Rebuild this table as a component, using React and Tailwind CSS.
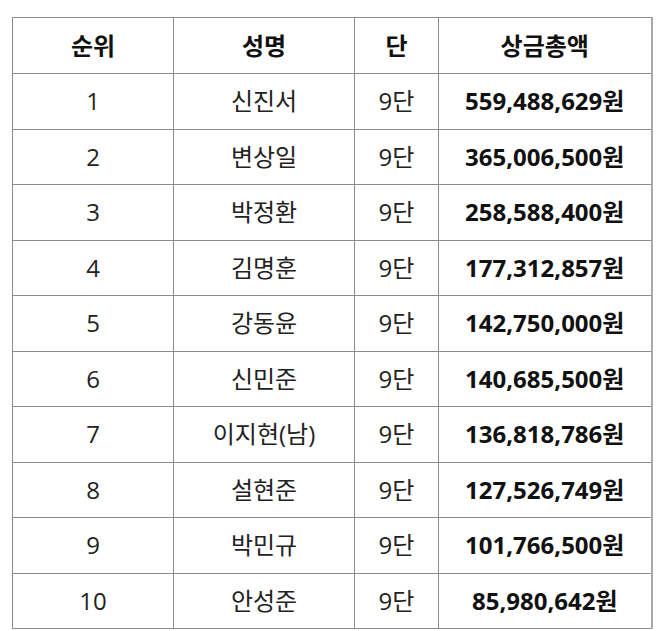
import React from 'react';

const rows = [
  { rank: 1, name: '신진서', dan: '9단', prize: '559,488,629원' },
  { rank: 2, name: '변상일', dan: '9단', prize: '365,006,500원' },
  { rank: 3, name: '박정환', dan: '9단', prize: '258,588,400원' },
  { rank: 4, name: '김명훈', dan: '9단', prize: '177,312,857원' },
  { rank: 5, name: '강동윤', dan: '9단', prize: '142,750,000원' },
  { rank: 6, name: '신민준', dan: '9단', prize: '140,685,500원' },
  { rank: 7, name: '이지현(남)', dan: '9단', prize: '136,818,786원' },
  { rank: 8, name: '설현준', dan: '9단', prize: '127,526,749원' },
  { rank: 9, name: '박민규', dan: '9단', prize: '101,766,500원' },
  { rank: 10, name: '안성준', dan: '9단', prize: '85,980,642원' },
];

const cell = 'border border-[#8c8c8c] text-center align-middle p-0';

const App = () => {
  return (
    <div className="w-[658px] h-[631px] bg-white pt-[17px] pl-[12px] font-['Open_Sans','Noto_Sans_CJK_KR',sans-serif] text-[24px] text-[#222]">
      <table className="table-fixed border-collapse w-[639px] border-r-2 border-r-[#a8a8a8]">
        <colgroup>
          <col className="w-[161px]" />
          <col className="w-[181px]" />
          <col className="w-[84px]" />
          <col className="w-[213px]" />
        </colgroup>
        <thead>
          <tr className="h-[56px] font-bold text-[#111]">
            <th className={cell}>순위</th>
            <th className={cell}>성명</th>
            <th className={cell}>단</th>
            <th className={`${cell} border-r-2 border-r-[#a8a8a8]`}>상금총액</th>
          </tr>
        </thead>
        <tbody>
          {rows.map((r) => (
            <tr key={r.rank} className="h-[55.5px]">
              <td className={cell}>{r.rank}</td>
              <td className={cell}>{r.name}</td>
              <td className={cell}>{r.dan}</td>
              <td className={`${cell} border-r-2 border-r-[#a8a8a8] font-bold text-[#111]`}>{r.prize}</td>
            </tr>
          ))}
        </tbody>
      </table>
    </div>
  );
};

export default App;
